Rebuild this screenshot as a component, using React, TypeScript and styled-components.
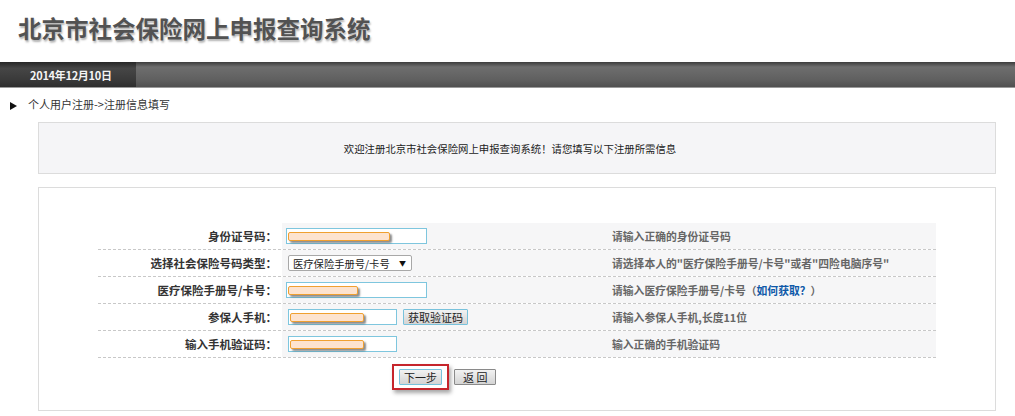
import React from 'react';
import styled, { createGlobalStyle } from 'styled-components';

const GlobalStyle = createGlobalStyle`
  html, body {
    margin: 0;
    padding: 0;
    background: #ffffff;
    font-family: "Liberation Sans", "Noto Sans CJK SC", sans-serif;
    font-size: 12px;
    color: #333;
  }
`;

const Page = styled.div`
  width: 1015px;
  height: 416px;
  overflow: hidden;
`;

const Header = styled.div`
  height: 62px;
  padding: 14px 0 0 18px;
  box-sizing: border-box;
`;

const Title = styled.h1`
  margin: 0;
  font-family: "Noto Sans CJK SC", sans-serif;
  font-size: 23.5px;
  line-height: 28px;
  font-weight: 700;
  color: #525252;
  text-shadow: 1px 2px 2px rgba(0, 0, 0, 0.3);
`;

const NavBar = styled.div`
  display: flex;
  height: 25px;
  background: linear-gradient(#3c3c3c 0%, #6e6e6e 20%, #606060 70%, #505050 100%);
  border-bottom: 1px solid #9a9a9a;
`;

const DateTab = styled.div`
  width: 136px;
  display: flex;
  align-items: center;
  padding-left: 30px;
  box-sizing: border-box;
  background: linear-gradient(#262626 0%, #464646 25%, #3a3a3a 70%, #2e2e2e 100%);
  color: #f4f4f4;
  font-family: "Noto Sans CJK SC", sans-serif;
  font-weight: bold;
  font-size: 11px;
  letter-spacing: -0.3px;
`;

const Crumb = styled.div`
  display: flex;
  align-items: center;
  height: 34px;
  padding: 0 0 2px 10px;
  box-sizing: border-box;
  color: #333;
  font-family: "Noto Sans CJK SC", sans-serif;
  font-size: 11px;
`;

const Arrow = styled.span`
  width: 0;
  height: 0;
  border-top: 4px solid transparent;
  border-bottom: 4px solid transparent;
  border-left: 7px solid #111;
  margin: 3px 11px 0 0;
`;

const Box = styled.div<{ $gray?: boolean }>`
  margin: 0 19px 0 38px;
  border: 1px solid #dcdcdc;
  background: ${(p) => (p.$gray ? '#f5f5f7' : '#ffffff')};
  box-sizing: border-box;
`;

const Welcome = styled(Box)`
  height: 52px;
  display: flex;
  align-items: center;
  justify-content: center;
  font-family: "Noto Sans CJK SC", sans-serif;
  font-size: 10.4px;
  color: #222;
  padding-right: 14px;
`;

const FormBox = styled(Box)`
  margin-top: 13px;
  height: 224px;
  padding: 35px 59px 0 59px;
`;

const Row = styled.div`
  display: grid;
  grid-template-columns: 184px 318px 336px;
  height: 27px;
  border-bottom: 1px dashed #c8c8c8;
  box-sizing: border-box;
`;

const Label = styled.div`
  display: flex;
  align-items: center;
  justify-content: flex-end;
  padding-right: 5px;
  font-family: "Noto Sans CJK SC", sans-serif;
  font-weight: bold;
  font-size: 11.5px;
  color: #333;
  background: #fff;
`;

const Field = styled.div`
  display: flex;
  align-items: center;
  gap: 6px;
  padding-left: 4px;
  background: #f6f6f7;
`;

const Hint = styled.div`
  display: flex;
  align-items: center;
  padding-left: 12px;
  font-family: "Noto Sans CJK SC", sans-serif;
  font-weight: bold;
  font-size: 10.8px;
  color: #666;
  background: #f6f6f7;
`;

const Link = styled.a`
  color: #0d58a8;
  font-weight: bold;
  text-decoration: none;
`;

const TextBox = styled.div<{ $w: number }>`
  position: relative;
  width: ${(p) => p.$w}px;
  height: 16px;
  border: 1px solid #7ec6de;
  background: #fff;
  box-sizing: border-box;
`;

const Redact = styled.span<{ $w: number }>`
  position: absolute;
  left: 1px;
  top: 3px;
  width: ${(p) => p.$w}px;
  height: 7px;
  border: 1px solid #f0a030;
  border-radius: 2px;
  background: #fde3cf;
  box-shadow: 2px 2px 2px rgba(0, 0, 0, 0.45);
`;

const SelectBox = styled.div`
  display: flex;
  align-items: center;
  justify-content: space-between;
  width: 124px;
  height: 16px;
  padding: 0 5px 0 4px;
  margin-left: 2px;
  box-sizing: border-box;
  border: 1px solid #a8a8a8;
  border-radius: 2px;
  background: #fff;
  font-family: "Noto Sans CJK SC", sans-serif;
  font-size: 10.3px;
  color: #222;
`;

const Caret = styled.span`
  font-size: 7px;
  color: #111;
`;

const GrayButton = styled.button<{ $focus?: boolean; $pad?: number }>`
  height: 16px;
  padding: 0 ${(p) => p.$pad ?? 4}px;
  border: 1px solid ${(p) => (p.$focus ? '#78c2dc' : '#8a8a8a')};
  border-radius: 1px;
  background: linear-gradient(#f2f2f2, #d4d4d4);
  font-family: "Noto Sans CJK SC", sans-serif;
  font-size: 11px;
  line-height: 14px;
  color: #222;
  cursor: pointer;
`;

const Actions = styled.div`
  display: flex;
  align-items: center;
  gap: 5px;
  padding: 6px 0 0 294px;
`;

const Highlight = styled.div`
  padding: 3px 5px;
  border: 2px solid #c6252c;
  box-shadow: 2px 3px 4px rgba(0, 0, 0, 0.35);
`;

type FormRow = {
  label: string;
  field: React.ReactNode;
  hint: React.ReactNode;
};

const rows: FormRow[] = [
  {
    label: '身份证号码：',
    field: (
      <TextBox $w={141}>
        <Redact $w={100} />
      </TextBox>
    ),
    hint: '请输入正确的身份证号码',
  },
  {
    label: '选择社会保险号码类型：',
    field: (
      <SelectBox>
        <span>医疗保险手册号/卡号</span>
        <Caret>▼</Caret>
      </SelectBox>
    ),
    hint: '请选择本人的"医疗保险手册号/卡号"或者"四险电脑序号"',
  },
  {
    label: '医疗保险手册号/卡号：',
    field: (
      <TextBox $w={141}>
        <Redact $w={68} />
      </TextBox>
    ),
    hint: (
      <>
        请输入医疗保险手册号/卡号（<Link href="#">如何获取？</Link>）
      </>
    ),
  },
  {
    label: '参保人手机：',
    field: (
      <>
        <TextBox $w={109} style={{ marginLeft: 2 }}>
          <Redact $w={72} />
        </TextBox>
        <GrayButton $focus>获取验证码</GrayButton>
      </>
    ),
    hint: '请输入参保人手机,长度11位',
  },
  {
    label: '输入手机验证码：',
    field: (
      <TextBox $w={109} style={{ marginLeft: 2 }}>
        <Redact $w={72} />
      </TextBox>
    ),
    hint: '输入正确的手机验证码',
  },
];

const App: React.FC = () => {
  return (
    <Page>
      <GlobalStyle />
      <Header>
        <Title>北京市社会保险网上申报查询系统</Title>
      </Header>
      <NavBar>
        <DateTab>2014年12月10日</DateTab>
      </NavBar>
      <Crumb>
        <Arrow />
        个人用户注册-&gt;注册信息填写
      </Crumb>
      <Welcome $gray>欢迎注册北京市社会保险网上申报查询系统！请您填写以下注册所需信息</Welcome>
      <FormBox>
        {rows.map((r) => (
          <Row key={r.label}>
            <Label>{r.label}</Label>
            <Field>{r.field}</Field>
            <Hint>{r.hint}</Hint>
          </Row>
        ))}
        <Actions>
          <Highlight>
            <GrayButton $focus>下一步</GrayButton>
          </Highlight>
          <GrayButton $pad={8}>返 回</GrayButton>
        </Actions>
      </FormBox>
    </Page>
  );
};

export default App;
